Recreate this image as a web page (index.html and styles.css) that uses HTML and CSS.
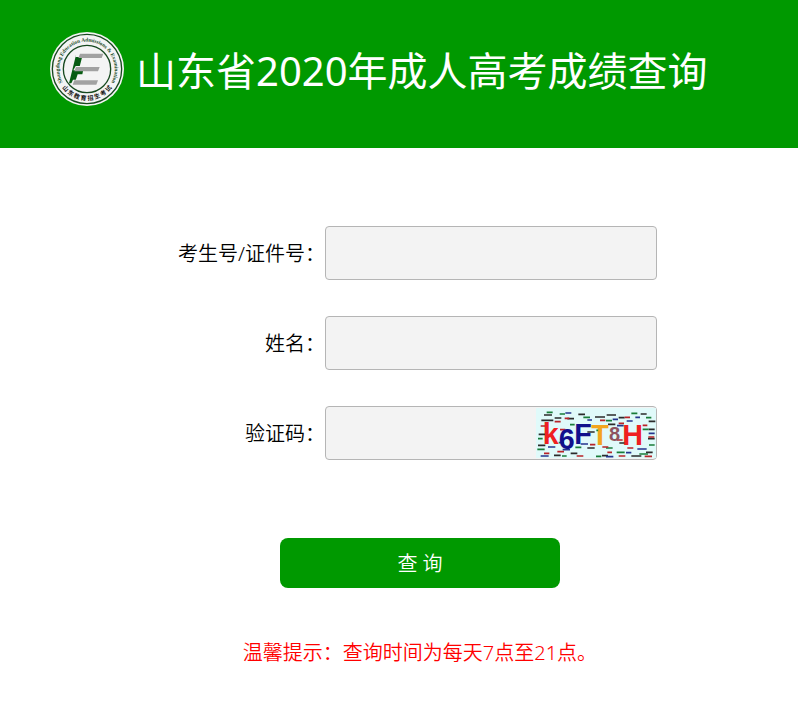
FILE: index.html
```html
<!DOCTYPE html>
<html lang="zh-CN">
  <head>
    <meta charset="UTF-8" />
    <meta name="viewport" content="width=device-width, initial-scale=1.0" />
    <title>山东省2020年成人高考成绩查询</title>
    <link rel="stylesheet" href="styles.css">
  </head>
  <body>
    <header class="header">
      <svg class="logo" viewBox="0 0 228 228" aria-hidden="true">
        <defs>
          <path id="arc-top" d="M42 156 A83 83 0 1 1 186 156" />
          <path id="arc-bottom" d="M23 134 A93 93 0 0 0 205 134" />
        </defs>
        <circle cx="114" cy="114" r="111" fill="#f4f4f4" />
        <circle cx="114" cy="114" r="104" fill="none" stroke="#17491f" stroke-width="4" />
        <circle cx="114" cy="114" r="71" fill="none" stroke="#17491f" stroke-width="4" />
        <text class="logo-en"><textPath href="#arc-top" startOffset="50%">Shangdong Education Admissions &amp; Examination</textPath></text>
        <text class="logo-cn"><textPath href="#arc-bottom" startOffset="50%">山 东 教 育 招 生 考 试</textPath></text>
        <path d="M81 72 L101 72 L91 110 L103 116 L100 130 L86 130 L77 157 L60 157 Z" fill="#075c12" />
        <path d="M83 65 H160 L154 78 H79 Z M80 105 H151 L145 118 H73 Z M72 146 H145 L139 159 H66 Z" fill="#f4f4f4" />
        <path d="M93 68 H163 L158 81 H88 Z M81 108 H152 L147 121 H76 Z M76 148 H147 L142 161 H71 Z" fill="#a2a2a2" />
      </svg>
      <h1 class="title">山东省2020年成人高考成绩查询</h1>
    </header>

    <main class="main">
      <form class="form">
        <div class="row">
          <label for="number">考生号/证件号：</label>
          <input type="text" id="number" name="number">
        </div>
        <div class="row">
          <label for="name">姓名：</label>
          <input type="text" id="name" name="name">
        </div>
        <div class="row">
          <label for="code">验证码：</label>
          <div class="code-box">
            <input type="text" id="code" name="code" autocomplete="off">
            <svg class="captcha" viewBox="6 12 360 150" role="img" aria-label="验证码">
              <rect x="6" y="12" width="360" height="150" fill="#e0fafa" />
              <g fill="none" stroke-width="5">
                <path stroke="#2b2b2b" d="M30 33h24 M22 49h36 M62 42h20 M100 44h20 M133 31h20 M183 39h30 M218 33h28 M254 41h18 M320 30h18 M344 52h20 M344 76h18 M14 91h20 M160 84h22 M222 61h22 M342 104h20 M12 124h22 M160 132h22 M256 117h22 M110 148h20 M60 154h20 M292 156h30 M204 155h18 M336 145h20" />
                <path stroke="#187c39" d="M38 25h18 M77 30h16 M148 40h20 M292 28h18 M216 50h18 M336 41h16 M326 76h18 M108 62h14 M187 79h16 M10 136h22 M74 116h16 M216 132h20 M345 123h17 M248 145h24 M316 150h26 M124 130h18 M186 157h16 M84 156h14 M12 104h14" />
                <path stroke="#b82429" d="M62 53h18 M92 43h14 M198 49h16 M254 58h16 M272 40h16 M343 99h18 M326 64h14 M20 66h16 M78 77h16 M168 122h16 M248 108h18 M205 129h18 M70 143h20 M128 156h20 M254 156h20 M332 157h22 M30 148h16 M280 132h18 M220 145h14" />
                <path stroke="#25358d" d="M94 27h18 M160 48h14 M236 46h16 M278 51h18 M304 40h14 M37 95h18 M249 65h20 M344 88h18 M140 120h22 M310 135h28 M216 158h22 M42 129h22 M86 137h22 M20 156h24 M276 146h16" />
              </g>
              <g class="captcha-text">
                <text x="26" y="121" fill="#ef2020">k</text>
                <text x="74" y="135" fill="#10108c">6</text>
                <text x="121" y="119" fill="#10108c">F</text>
                <text x="172" y="124" fill="#f3a51e">T</text>
                <text x="225" y="112" fill="#8e5360" class="captcha-small">8</text>
                <text x="265" y="124" fill="#ef2020">H</text>
              </g>
            </svg>
          </div>
        </div>
        <button type="submit" class="btn">查 询</button>
      </form>
      <p class="tip">温馨提示：查询时间为每天7点至21点。</p>
    </main>
  </body>
</html>
```
FILE: styles.css
```css
* {
  box-sizing: border-box;
}
body {
  margin: 0;
  background-color: #fff;
  color: #000;
  font-family: "Noto Sans", "Noto Sans CJK SC", sans-serif;
  font-size: 20px;
  font-weight: 350;
  line-height: 28px;
}
.header {
  display: flex;
  align-items: flex-start;
  gap: 11px;
  padding: 31px 49px 37px;
  background-color: #009900;
}
.logo {
  flex: none;
  width: 76px;
  height: 76px;
}
.logo-en {
  fill: #17491f;
  font-family: "Liberation Serif", serif;
  font-size: 16px;
  font-weight: bold;
  text-anchor: middle;
}
.logo-cn {
  fill: #111;
  font-family: "Noto Sans CJK SC", sans-serif;
  font-size: 18px;
  font-weight: bold;
  text-anchor: middle;
}
.title {
  margin: 0;
  color: #fff;
  font-size: 40px;
  font-weight: 400;
  line-height: 80px;
  white-space: nowrap;
}
/* the form column sits slightly right of the middle */
.main {
  padding: 78px 0 44px 42px;
}
.form {
  display: flex;
  flex-direction: column;
  gap: 36px;
  max-width: 494px;
  margin: 0 auto;
}
.row {
  display: grid;
  grid-template-columns: 152px 1fr;
  align-items: center;
  padding-right: 10px;
}
.row label {
  padding-top: 2px;
  text-align: right;
  white-space: nowrap;
}
.row input {
  display: block;
  width: 100%;
  height: 54px;
  padding: 0 12px;
  border: 1px solid #b5b5b5;
  border-radius: 4px;
  background-color: #f3f3f3;
  font: inherit;
}
.code-box {
  position: relative;
}
.code-box input {
  padding-right: 128px;
}
.captcha {
  position: absolute;
  top: 2px;
  right: 1px;
  width: 120px;
  height: 50px;
}
.captcha-text {
  font-family: "Liberation Sans", Arial, sans-serif;
  font-size: 86px;
  font-weight: bold;
}
.captcha-small {
  font-size: 60px;
}
.btn {
  align-self: center;
  width: 280px;
  height: 50px;
  margin-top: 42px;
  padding-top: 2px;
  border: 0;
  border-radius: 8px;
  background-color: #009900;
  color: #fff;
  font: inherit;
  cursor: pointer;
}
.tip {
  margin: 51px 0 0;
  color: #f00;
  text-align: center;
}
```
